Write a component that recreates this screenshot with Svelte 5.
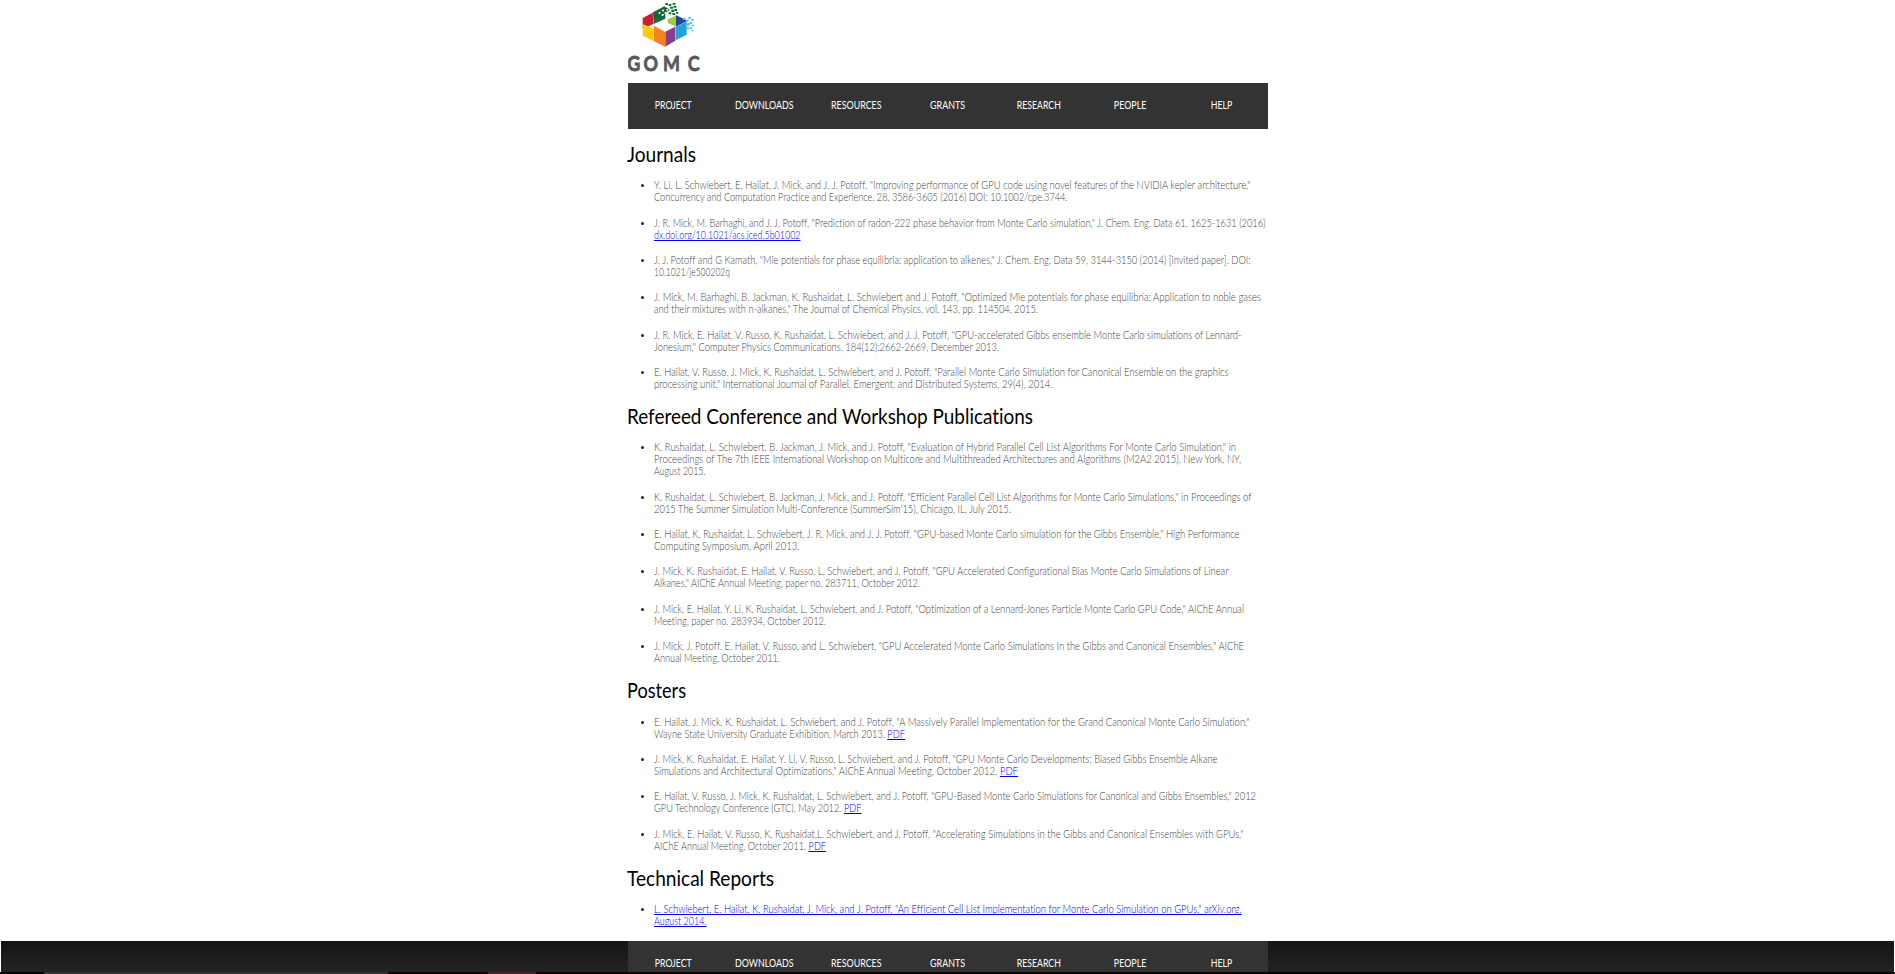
<script>
  const nav = [
    { t: 'PROJECT', w: 37 }, { t: 'DOWNLOADS', w: 58.5 }, { t: 'RESOURCES', w: 50.5 },
    { t: 'GRANTS', w: 35 }, { t: 'RESEARCH', w: 44 }, { t: 'PEOPLE', w: 32.5 }, { t: 'HELP', w: 21.5 }
  ];

  const sections = [
    { title: 'Journals', w: 69, h: 261.8, items: [
      [{ t: 'Y. Li, L. Schwiebert, E. Hailat, J. Mick, and J. J. Potoff, "Improving performance of GPU code using novel features of the NVIDIA kepler architecture,"', w: 596.5 },
       { t: 'Concurrency and Computation Practice and Experience, 28, 3586-3605 (2016) DOI: 10.1002/cpe.3744.', w: 413.5 }],
      [{ t: 'J. R. Mick, M. Barhaghi, and J. J. Potoff, "Prediction of radon-222 phase behavior from Monte Carlo simulation," J. Chem. Eng. Data 61, 1625-1631 (2016)', w: 611.5 },
       { a: 'dx.doi.org/10.1021/acs.jced.5b01002', w: 146.5 }],
      [{ t: 'J. J. Potoff and G Kamath, "Mie potentials for phase equilibria: application to alkenes," J. Chem. Eng. Data 59, 3144-3150 (2014) [invited paper]. DOI:', w: 596.5 },
       { t: '10.1021/je500202q', w: 76 }],
      [{ t: 'J. Mick, M. Barhaghi, B. Jackman, K. Rushaidat, L. Schwiebert and J. Potoff, "Optimized Mie potentials for phase equilibria: Application to noble gases', w: 607 },
       { t: 'and their mixtures with n-alkanes," The Journal of Chemical Physics, vol. 143, pp. 114504, 2015.', w: 384 }],
      [{ t: 'J. R. Mick, E. Hailat, V. Russo, K. Rushaidat, L. Schwiebert, and J. J. Potoff, "GPU-accelerated Gibbs ensemble Monte Carlo simulations of Lennard-', w: 587.5 },
       { t: 'Jonesium," Computer Physics Communications, 184(12):2662-2669, December 2013.', w: 345 }],
      [{ t: 'E. Hailat, V. Russo, J. Mick, K. Rushaidat, L. Schwiebert, and J. Potoff, "Parallel Monte Carlo Simulation for Canonical Ensemble on the graphics', w: 574.5 },
       { t: 'processing unit," International Journal of Parallel, Emergent, and Distributed Systems, 29(4), 2014.', w: 398.5 }]
    ] },
    { title: 'Refereed Conference and Workshop Publications', w: 406, h: 274, items: [
      [{ t: 'K. Rushaidat, L. Schwiebert, B. Jackman, J. Mick, and J. Potoff, "Evaluation of Hybrid Parallel Cell List Algorithms For Monte Carlo Simulation," in', w: 582 },
       { t: 'Proceedings of The 7th IEEE International Workshop on Multicore and Multithreaded Architectures and Algorithms (M2A2 2015), New York, NY,', w: 587 },
       { t: 'August 2015.', w: 51.5 }],
      [{ t: 'K. Rushaidat, L. Schwiebert, B. Jackman, J. Mick, and J. Potoff, "Efficient Parallel Cell List Algorithms for Monte Carlo Simulations," in Proceedings of', w: 597.5 },
       { t: "2015 The Summer Simulation Multi-Conference (SummerSim'15), Chicago, IL, July 2015.", w: 357 }],
      [{ t: 'E. Hailat, K. Rushaidat, L. Schwiebert, J. R. Mick, and J. J. Potoff, "GPU-based Monte Carlo simulation for the Gibbs Ensemble," High Performance', w: 585.5 },
       { t: 'Computing Symposium, April 2013.', w: 145.5 }],
      [{ t: 'J. Mick, K. Rushaidat, E. Hailat, V. Russo, L. Schwiebert, and J. Potoff, "GPU Accelerated Configurational Bias Monte Carlo Simulations of Linear', w: 574.5 },
       { t: 'Alkanes," AIChE Annual Meeting, paper no. 283711, October 2012.', w: 266 }],
      [{ t: 'J. Mick, E. Hailat, Y. Li, K. Rushaidat, L. Schwiebert, and J. Potoff, "Optimization of a Lennard-Jones Particle Monte Carlo GPU Code," AIChE Annual', w: 590 },
       { t: 'Meeting, paper no. 283934, October 2012.', w: 172 }],
      [{ t: 'J. Mick, J. Potoff, E. Hailat, V. Russo, and L. Schwiebert, "GPU Accelerated Monte Carlo Simulations In the Gibbs and Canonical Ensembles," AIChE', w: 590 },
       { t: 'Annual Meeting, October 2011.', w: 126 }]
    ] },
    { title: 'Posters', w: 59, h: 188, items: [
      [{ t: 'E. Hailat, J. Mick, K. Rushaidat, L. Schwiebert, and J. Potoff, "A Massively Parallel Implementation for the Grand Canonical Monte Carlo Simulation,"', w: 595.5 },
       { t: 'Wayne State University Graduate Exhibition, March 2013. ', a: 'PDF', w: 251 }],
      [{ t: 'J. Mick, K. Rushaidat, E. Hailat, Y. Li, V. Russo, L. Schwiebert, and J. Potoff, "GPU Monte Carlo Developments: Biased Gibbs Ensemble Alkane', w: 563.5 },
       { t: 'Simulations and Architectural Optimizations," AIChE Annual Meeting, October 2012. ', a: 'PDF', w: 364 }],
      [{ t: 'E. Hailat, V. Russo, J. Mick, K. Rushaidat, L. Schwiebert, and J. Potoff, "GPU-Based Monte Carlo Simulations for Canonical and Gibbs Ensembles," 2012', w: 602 },
       { t: 'GPU Technology Conference (GTC), May 2012. ', a: 'PDF', w: 207.5 }],
      [{ t: 'J. Mick, E. Hailat, V. Russo, K. Rushaidat,L. Schwiebert, and J. Potoff, "Accelerating Simulations in the Gibbs and Canonical Ensembles with GPUs,"', w: 589.5 },
       { t: 'AIChE Annual Meeting, October 2011. ', a: 'PDF', w: 172 }]
    ] },
    { title: 'Technical Reports', w: 147, h: 56, items: [
      [{ a: 'L. Schwiebert, E. Hailat, K. Rushaidat, J. Mick, and J. Potoff, "An Efficient Cell List Implementation for Monte Carlo Simulation on GPUs," arXiv.org,', w: 587.5 },
       { a: 'August 2014.', w: 52.5 }]
    ] }
  ];

  // Condenses a line of text so that it sets to the given measure.
  function fit(node, width) {
    node.style.transform = `scaleX(${width / node.getBoundingClientRect().width})`;
  }
</script>

{#snippet menu()}
  <nav>
    {#each nav as n}<a href="#top"><span use:fit={n.w}>{n.t}</span></a>{/each}
  </nav>
{/snippet}

<div class="page">
  <main>
    <svg class="logo" width="76" height="83" viewBox="24 0 228 249">
      <polygon points="68,54 98,38 100,72 68,86" fill="#c4202f" />
      <polygon points="99,37 133,19 150,30 136,39 136,56 101,72" fill="#136a38" />
      <g fill="#136a38">
        <path d="M136 9h8v6h-8zM146 12h8v6h-8zM158 9h8v5h-8zM150 20h9v6h-9zM161 17h8v6h-8zM154 29h8v7h-8zM163 27h8v6h-8zM146 37h8v6h-8zM157 39h8v6h-8zM168 36h6v5h-6z" />
      </g>
      <g fill="#fff"><path d="M116 36h5v5h-5zM126 29h6v5h-6zM134 36h5v6h-5zM125 42h6v5h-6zM139 28h5v4h-5z" /></g>
      <polygon points="68,72 101,86 101,124 68,107" fill="#fbcb0a" />
      <polygon points="102,78 135,95 135,140 102,124" fill="#f58220" />
      <polygon points="136,95 166,80 166,122 136,140" fill="#813f98" />
      <polygon points="167,81 200,64 200,104 167,121" fill="#23a3dd" />
      <polygon points="143,58 166,48 166,79 143,69" fill="#9ccb3b" />
      <polygon points="167,45 199,60 199,64 167,80" fill="#20459c" />
      <g fill="#52b8e8">
        <path d="M188 54h8v6h-8zM199 59h7v6h-7zM205 51h7v6h-7zM214 57h7v5h-7zM201 70h8v7h-8zM209 66h7v6h-7zM216 74h6v5h-6zM201 82h7v6h-7zM210 82h6v5h-6zM214 89h5v5h-5z" />
      </g>
      <text transform="scale(.84 1)" x="26 84 154 242" y="212">GOMC</text>
    </svg>
    {@render menu()}
    <div class="content">
      {#each sections as s}
        <section style:height="{s.h}px">
          <h2><span use:fit={s.w}>{s.title}</span></h2>
          <ul>
            {#each s.items as item}
              <li>
                {#each item as l}
                  <div class="line"><span use:fit={l.w}>{l.t ?? ''}{#if l.a}<a href="#top">{l.a}</a>{/if}</span></div>
                {/each}
              </li>
            {/each}
          </ul>
        </section>
      {/each}
    </div>
  </main>
  <footer>{@render menu()}</footer>
  <div class="taskbar"></div>
</div>

<style>
  :global(body) { background: #fff; overflow: hidden; }
  .page { height: 974px; display: flex; flex-direction: column; overflow: hidden; font-family: Lato, sans-serif; font-variant-ligatures: none; }
  main { width: 641px; height: 941px; flex: none; margin: 0 auto; padding-left: 1px; box-sizing: border-box; }
  .logo { display: block; }
  .logo text { font: 700 64px Lato, sans-serif; fill: #58595b; stroke: #58595b; stroke-width: 2.5px; }
  nav { width: 640px; height: 46px; background: #333; display: grid; grid-template-columns: repeat(7, 1fr); }
  nav a { color: #fff; text-decoration: none; text-align: center; font-size: 11px; line-height: 43px; font-weight: 400; white-space: nowrap; }
  nav span { display: inline-block; line-height: 43px; margin-left: -1px; }
  footer nav span { margin-left: 0; }
  .content { padding-top: 11.2px; }
  section { display: flex; flex-direction: column; }
  h2 { margin: 0 0 11px -1px; font-size: 21px; line-height: 28px; font-weight: 400; color: #000; white-space: nowrap; flex: none; }
  h2 span, .line span { display: inline-block; transform-origin: 0 0; }
  ul { margin: 0; padding: 0 0 0 26px; list-style: none; display: flex; flex-direction: column; gap: 13.4px; }
  section:nth-child(2) ul { padding-top: 0.2px; }
  section:nth-child(3) ul { padding-top: 0.6px; }
  li { position: relative; }
  li::before { content: ''; position: absolute; left: -13px; top: 5px; width: 3px; height: 3px; border-radius: 50%; background: #222; }
  .line { height: 12px; line-height: 12px; font-size: 11px; font-weight: 300; color: #444; white-space: pre; }
  .line a { color: #00e; text-decoration: underline; text-decoration-skip-ink: none; text-decoration-thickness: 1px; text-underline-offset: 1px; }
  footer { height: 31px; flex: none; overflow: hidden; margin: 0 1px; background: linear-gradient(#141414, #232323); display: flex; justify-content: center; }
  .taskbar { height: 2px; flex: none; background: linear-gradient(90deg, #000 44px, #333 44px 388px, #140000 388px 488px, #44282b 488px 536px, #140000 536px 640px, #080404 640px); }
</style>
